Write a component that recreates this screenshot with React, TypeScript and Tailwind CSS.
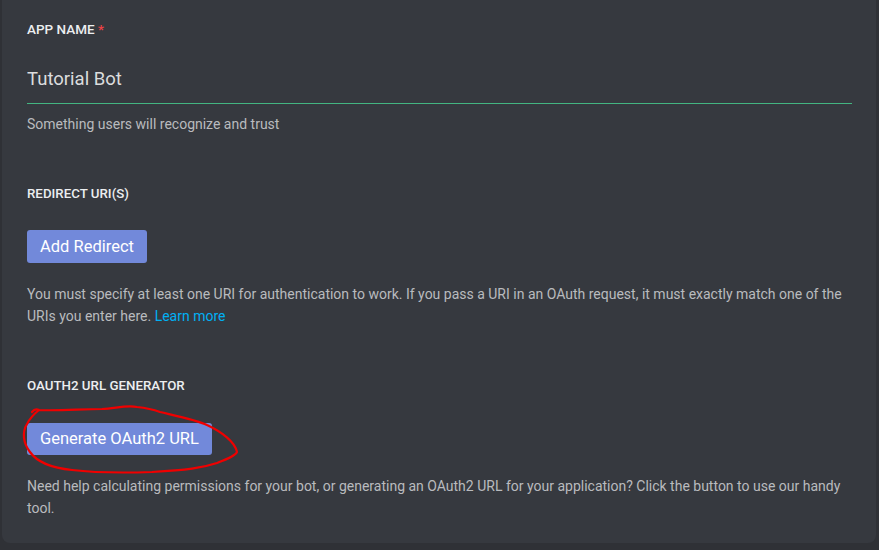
import React from "react";

const font = { fontFamily: "Roboto, 'Noto Sans', sans-serif" };

export default function App() {
  return (
    <div className="w-[879px] h-[550px] bg-[#2f3136] overflow-hidden" style={font}>
      <div className="ml-[2px] w-[874px] h-[543px] bg-[#36393f] rounded-b-[8px] pl-[25px] pr-[24px] pt-[19px] relative">
        {/* APP NAME */}
        <div className="h-[20px] leading-[20px] text-[13.5px] font-medium uppercase text-[#eceef0]">
          App Name <span className="text-[#ed4245]">*</span>
        </div>
        <div className="mt-[26px]">
          <div className="h-[28px] leading-[28px] text-[18.5px] text-[#dcddde]">Tutorial Bot</div>
          <div className="mt-[10px] h-[1px] bg-[#43b581]" />
        </div>
        <div className="mt-[10px] h-[20px] leading-[20px] text-[14px] text-[#b9bbbe]">
          Something users will recognize and trust
        </div>

        {/* REDIRECT */}
        <div className="mt-[50px] h-[20px] leading-[20px] text-[13.3px] font-medium uppercase text-[#eceef0]">
          Redirect URI(s)
        </div>
        <div className="mt-[26px] flex">
          <button className="h-[33px] px-[13px] rounded-[3px] bg-[#7289da] text-white text-[16.5px] leading-[33px]">
            Add Redirect
          </button>
        </div>
        <p className="mt-[20px] text-[14px] leading-[22px] text-[#b9bbbe]">
          You must specify at least one URI for authentication to work. If you pass a URI in an OAuth request, it must exactly match one of the URIs you enter here.{" "}
          <span className="text-[#00b0f4]">Learn more</span>
        </p>

        {/* OAUTH2 */}
        <div className="mt-[49px] h-[20px] leading-[20px] text-[13.3px] font-medium uppercase text-[#eceef0]">
          OAuth2 URL Generator
        </div>
        <div className="mt-[27px] flex">
          <button className="h-[32px] px-[13px] rounded-[3px] bg-[#7289da] text-white text-[16.5px] leading-[32px]">
            Generate OAuth2 URL
          </button>
        </div>
        <p className="mt-[20px] text-[14px] leading-[22px] text-[#b9bbbe]">
          Need help calculating permissions for your bot, or generating an OAuth2 URL for your application? Click the button to use our handy tool.
        </p>

        <svg
          className="absolute left-0 top-0 pointer-events-none"
          width="879"
          height="550"
          viewBox="0 0 879 550"
          fill="none"
        >
          <path
            d="M 30 412 Q 33 408 37 410 C 55 411 80 409 100 409 C 115 408 125 405 135 407 C 145 408 150 409 158 412 C 175 416 195 420 205 425 C 220 432 233 442 235 452 C 233 456 225 459 215 463 C 200 468 185 470 150 472 C 120 473 95 473 70 470 C 50 468 35 462 28 452 C 21 443 20 432 25 424 C 28 418 32 414 37 410"
            stroke="#f00000"
            strokeWidth="2.2"
            strokeLinecap="round"
            strokeLinejoin="round"
          />
        </svg>
      </div>
    </div>
  );
}
